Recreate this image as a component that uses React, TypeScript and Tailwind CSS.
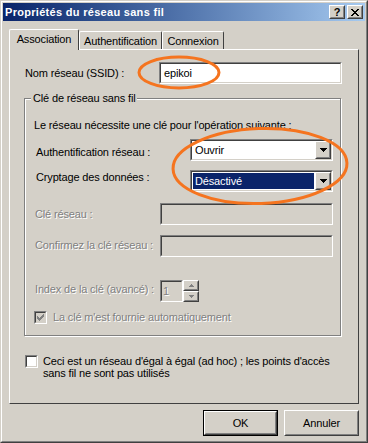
import React from "react";

type BoxProps = { className?: string; innerClassName?: string; children?: React.ReactNode };

function Raised({ className = "", innerClassName = "", children }: BoxProps) {
  return (
    <div className={`bg-[#d4d0c8] border border-t-white border-l-white border-r-[#404040] border-b-[#404040] ${className}`}>
      <div className={`w-full h-full border border-t-[#d4d0c8] border-l-[#d4d0c8] border-r-[#808080] border-b-[#808080] ${innerClassName}`}>
        {children}
      </div>
    </div>
  );
}

function Sunken({ className = "", innerClassName = "", children }: BoxProps) {
  return (
    <div className={`border border-t-[#808080] border-l-[#808080] border-r-white border-b-white ${className}`}>
      <div className={`w-full h-full border border-t-[#404040] border-l-[#404040] border-r-[#d4d0c8] border-b-[#d4d0c8] ${innerClassName}`}>
        {children}
      </div>
    </div>
  );
}

const dis = "text-[#808080] [text-shadow:1px_1px_0_#ffffff]";

function DownArrow({ color = "#000" }: { color?: string }) {
  return (
    <svg width="7" height="4" viewBox="0 0 7 4">
      <path d="M0 0h7v1H0zM1 1h5v1H1zM2 2h3v1H2zM3 3h1v1H3z" fill={color} />
    </svg>
  );
}

function Combo({ text, selected = false }: { text: string; selected?: boolean }) {
  return (
    <Sunken className="w-[143px] h-[22px]" innerClassName="bg-white flex items-stretch">
      <div className="flex-1 flex items-stretch p-px">
        {selected ? (
          <div className="flex-1 bg-[#0a246a] text-white flex items-center pl-[2px]">{text}</div>
        ) : (
          <div className="flex-1 flex items-center pl-[2px]">{text}</div>
        )}
      </div>
      <Raised className="w-[16px] h-[18px]" innerClassName="flex items-center justify-center">
        <DownArrow />
      </Raised>
    </Sunken>
  );
}

function Check({ disabled = false, checked = false }: { disabled?: boolean; checked?: boolean }) {
  return (
    <Sunken className="w-[13px] h-[13px] shrink-0" innerClassName={`${disabled ? "bg-[#d4d0c8]" : "bg-white"} flex items-center justify-center`}>
      {checked && (
        <svg width="7" height="7" viewBox="0 0 7 7">
          <path d="M0 2h1v3H0zM1 3h1v3H1zM2 4h1v3H2zM3 3h1v3H3zM4 2h1v3H4zM5 1h1v3H5zM6 0h1v3H6z" fill={disabled ? "#808080" : "#000"} />
        </svg>
      )}
    </Sunken>
  );
}

export default function App() {
  return (
    <div className="relative w-[368px] h-[443px] font-['Liberation_Sans',Arial,sans-serif] text-[11px] leading-[13px] tracking-[-0.15px] text-black select-none">
      <div className="w-full h-full bg-[#d4d0c8] border border-t-[#d4d0c8] border-l-[#d4d0c8] border-r-[#404040] border-b-[#404040]">
        <div className="w-full h-full border border-t-white border-l-white border-r-[#808080] border-b-[#808080] p-px flex flex-col">
          {/* Title bar */}
          <div className="h-[18px] shrink-0 flex items-center bg-linear-to-r from-[#0a246a] to-[#a6caf0] pl-[2px] pr-[2px]">
            <span className="flex-1 font-bold text-white text-[11px] tracking-[0.3px] leading-[13px]">Propriétés du réseau sans fil</span>
            <Raised className="w-[16px] h-[14px]" innerClassName="flex items-center justify-center">
              <span className="font-bold text-[11px] leading-[11px] text-black tracking-normal">?</span>
            </Raised>
            <Raised className="w-[16px] h-[14px] ml-[2px]" innerClassName="flex items-center justify-center">
              <svg width="8" height="7" viewBox="0 0 8 7">
                <path d="M0 0h2v1H0zM6 0h2v1H6zM1 1h2v1H1zM5 1h2v1H5zM2 2h4v1H2zM3 3h2v1H3zM2 4h4v1H2zM1 5h2v1H1zM5 5h2v1H5zM0 6h2v1H0zM6 6h2v1H6z" fill="#000" />
              </svg>
            </Raised>
          </div>

          {/* Body */}
          <div className="flex flex-col px-[6px]">
            {/* Tabs */}
            <div className="mt-[8px] h-[20px] flex items-start">
              <div className="relative z-10 w-[70px] h-[21px] bg-[#d4d0c8] border-t border-l border-t-white border-l-white border-r border-r-[#404040] rounded-tl-[2px] rounded-tr-[2px] flex items-start justify-center pt-[3px]">
                Association
              </div>
              <div className="mt-[2px] w-[83px] h-[18px] border-t border-l border-t-white border-l-white border-r border-r-[#404040] rounded-tl-[2px] rounded-tr-[2px] flex items-start justify-center pt-[3px]">
                Authentification
              </div>
              <div className="mt-[2px] w-[62px] h-[18px] border-t border-l border-t-white border-l-white border-r border-r-[#404040] rounded-tl-[2px] rounded-tr-[2px] flex items-start justify-center pt-[3px]">
                Connexion
              </div>
            </div>

            {/* Panel */}
            <div className="w-[350px] h-[355px] border border-t-white border-l-white border-r-[#404040] border-b-[#404040] flex flex-col">
              {/* SSID row */}
              <div className="mt-[12px] h-[22px] flex items-center">
                <div className="w-[149px] pl-[15px]">Nom réseau (SSID) :</div>
                <Sunken className="w-[183px] h-[22px]" innerClassName="bg-white flex items-center pl-[3px]">
                  epikoi
                </Sunken>
              </div>

              {/* Group box */}
              <div className="relative mt-[14px] ml-[14px] w-[317px] h-[238px] border border-[#808080] shadow-[inset_1px_1px_0_#ffffff,1px_1px_0_#ffffff] flex flex-col">
                <span className="absolute -top-[7px] left-[6px] bg-[#d4d0c8] px-[2px]">Clé de réseau sans fil</span>

                <div className="mt-[20px] pl-[9px] h-[13px]">Le réseau nécessite une clé pour l'opération suivante :</div>

                <div className="mt-[7px] flex items-start">
                  <div className="w-[165px] pl-[11px] mt-[7px]">Authentification réseau :</div>
                  <Combo text="Ouvrir" />
                </div>

                <div className="mt-[9px] flex items-start">
                  <div className="w-[165px] pl-[11px] mt-[1px]">Cryptage des données :</div>
                  <Combo text="Désactivé" selected />
                </div>

                <div className="mt-[11px] flex items-start">
                  <div className={`w-[135px] pl-[10px] mt-[5px] ${dis}`}>Clé réseau :</div>
                  <Sunken className="w-[173px] h-[22px]" innerClassName="bg-[#d4d0c8]" />
                </div>

                <div className="mt-[10px] flex items-start">
                  <div className={`w-[135px] pl-[10px] mt-[4px] ${dis}`}>Confirmez la clé réseau :</div>
                  <Sunken className="w-[173px] h-[22px]" innerClassName="bg-[#d4d0c8]" />
                </div>

                <div className="mt-[23px] flex items-start">
                  <div className={`w-[135px] pl-[10px] mt-[3px] ${dis}`}>Index de la clé (avancé) :</div>
                  <div className="flex h-[22px]">
                    <Sunken className="w-[23px] h-[22px]" innerClassName="bg-[#d4d0c8] flex items-center pl-[1px]">
                      <span className={dis}>1</span>
                    </Sunken>
                    <div className="flex flex-col">
                      <Raised className="w-[16px] h-[11px]" innerClassName="flex items-center justify-center">
                        <svg width="5" height="3" viewBox="0 0 5 3">
                          <path d="M2 0h1v1H2zM1 1h3v1H1zM0 2h5v1H0z" fill="#808080" />
                        </svg>
                      </Raised>
                      <Raised className="w-[16px] h-[11px]" innerClassName="flex items-center justify-center">
                        <svg width="5" height="3" viewBox="0 0 5 3">
                          <path d="M0 0h5v1H0zM1 1h3v1H1zM2 2h1v1H2z" fill="#808080" />
                        </svg>
                      </Raised>
                    </div>
                  </div>
                </div>

                <div className="mt-[9px] pl-[9px] flex items-center">
                  <Check disabled checked />
                  <span className={`ml-[6px] ${dis}`}>La clé m'est fournie automatiquement</span>
                </div>
              </div>

              {/* Ad hoc */}
              <div className="mt-[19px] pl-[15px] flex items-start">
                <Check />
                <div className="ml-[5px] leading-[12px]">
                  Ceci est un réseau d'égal à égal (ad hoc) ; les points d'accès
                  <br />
                  sans fil ne sont pas utilisés
                </div>
              </div>
            </div>

            {/* Buttons */}
            <div className="mt-[6px] flex justify-end gap-[6px]">
              <div className="w-[75px] h-[26px] border border-black">
                <Raised className="w-full h-full" innerClassName="flex items-center justify-center">
                  OK
                </Raised>
              </div>
              <Raised className="w-[75px] h-[26px]" innerClassName="flex items-center justify-center">
                Annuler
              </Raised>
            </div>
          </div>
        </div>
      </div>

      {/* Orange annotation ellipses */}
      <svg className="absolute inset-0 pointer-events-none" width="368" height="443" viewBox="0 0 368 443">
        <ellipse cx="179" cy="72.5" rx="40" ry="15.5" fill="none" stroke="#f5741f" strokeWidth="3" />
        <ellipse cx="260" cy="166" rx="87" ry="37.5" fill="none" stroke="#f5741f" strokeWidth="3" transform="rotate(-2 260 166)" />
      </svg>
    </div>
  );
}
